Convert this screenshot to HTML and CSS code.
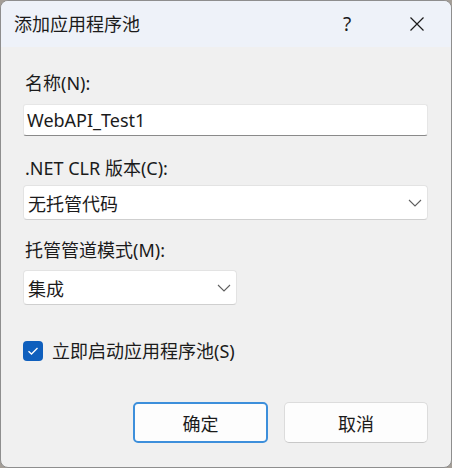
FILE: index.html
```html
<!DOCTYPE html>
<html lang="zh-CN">
<head>
<meta charset="utf-8">
<title>添加应用程序池</title>
<link rel="stylesheet" href="styles.css">
</head>
<body>
<div class="window">
  <div class="titlebar">
    <div class="title">添加应用程序池</div>
    <div class="tb-help">?</div>
    <div class="tb-close">
      <svg width="16" height="16" viewBox="0 0 16 16"><path d="M1.5 1.5 L14.5 14.5 M14.5 1.5 L1.5 14.5" stroke="#1b1b1b" stroke-width="1.2" fill="none"/></svg>
    </div>
  </div>
  <div class="content">
    <div class="label l1">名称(N):</div>
    <div class="textbox">WebAPI_Test1</div>
    <div class="label l2">.NET CLR 版本(C):</div>
    <div class="select wide">
      <span>无托管代码</span>
      <svg class="chev" width="14" height="8" viewBox="0 0 14 8"><path d="M1 1 L7 7 L13 1" stroke="#606060" stroke-width="1.1" fill="none"/></svg>
    </div>
    <div class="label l3">托管管道模式(M):</div>
    <div class="select narrow">
      <span>集成</span>
      <svg class="chev" width="14" height="8" viewBox="0 0 14 8"><path d="M1 1 L7 7 L13 1" stroke="#606060" stroke-width="1.1" fill="none"/></svg>
    </div>
    <div class="check-row">
      <div class="checkbox">
        <svg width="12" height="10" viewBox="0 0 12 10"><path d="M1.5 5.2 L4.5 8 L10.5 2" stroke="#ffffff" stroke-width="1.3" fill="none"/></svg>
      </div>
      <div class="check-label">立即启动应用程序池(S)</div>
    </div>
    <div class="buttons">
      <div class="btn primary">确定</div>
      <div class="btn secondary">取消</div>
    </div>
  </div>
</div>
</body>
</html>
```
FILE: styles.css
```css
* { box-sizing: border-box; }
html, body {
  margin: 0;
  padding: 0;
  background: #a49e97;
}
body {
  font-family: "Noto Sans", "Noto Sans CJK SC", sans-serif;
  font-size: 18px;
  color: #1b1b1b;
}
.window {
  width: 452px;
  height: 468px;
  border: 1px solid #8e8e8e;
  border-radius: 8px;
  overflow: hidden;
  background: #f0f0f0;
}
.titlebar {
  height: 46px;
  background: #eef2f9;
  display: flex;
  align-items: center;
  padding-left: 13px;
}
.title {
  flex: 1;
  line-height: 24px;
}
.tb-help {
  width: 50px;
  text-align: center;
  line-height: 24px;
  font-size: 19px;
}
.tb-close {
  width: 68px;
  margin-left: 11px;
  display: flex;
  justify-content: center;
  align-items: center;
}
.content {
  padding: 24px 23px 0 22px;
}
.label {
  line-height: 24px;
  height: 24px;
  padding-left: 2px;
}
.l1 { margin-top: 0; }
.l2 { margin-top: 20px; }
.l3 { margin-top: 18px; }
.textbox {
  margin-top: 9px;
  height: 32px;
  background: #ffffff;
  border: 1px solid #e6e6e6;
  border-bottom: 1px solid #8a8a8a;
  border-radius: 3px;
  padding-left: 3px;
  display: flex;
  align-items: center;
}
.select {
  height: 35px;
  background: #ffffff;
  border: 1px solid #e3e3e3;
  border-bottom-color: #cfcfcf;
  border-radius: 4px;
  display: flex;
  align-items: center;
  justify-content: space-between;
  padding: 0 5px 0 4px;
}
.wide { margin-top: 5px; width: 405px; }
.narrow { margin-top: 8px; width: 214px; }
.chev { margin-top: 1px; }
.check-row {
  margin-top: 34px;
  display: flex;
  align-items: center;
}
.checkbox {
  width: 20px;
  height: 20px;
  background: #0f5fbd;
  border-radius: 4px;
  display: flex;
  align-items: center;
  justify-content: center;
}
.check-label {
  margin-left: 9px;
  line-height: 24px;
}
.buttons {
  margin-top: 39px;
  display: flex;
  justify-content: flex-end;
  gap: 16px;
}
.btn {
  height: 41px;
  background: #fdfdfd;
  border-radius: 5px;
  display: flex;
  align-items: center;
  justify-content: center;
}
.primary {
  width: 135px;
  border: 2px solid #3d8fdb;
}
.secondary {
  width: 144px;
  border: 1px solid #dcdcdc;
  border-bottom-color: #c8c8c8;
}
```
